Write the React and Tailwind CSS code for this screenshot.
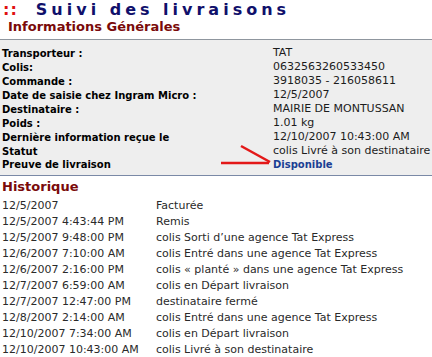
import React from 'react';

const infos = [
    ['Transporteur :', 'TAT'],
    ['Colis:', '0632563260533450'],
    ['Commande :', '3918035 - 216058611'],
    ['Date de saisie chez Ingram Micro :', '12/5/2007'],
    ['Destinataire :', 'MAIRIE DE MONTUSSAN'],
    ['Poids :', '1.01 kg'],
    ['Dernière information reçue le', '12/10/2007 10:43:00 AM'],
    ['Statut', 'colis Livré à son destinataire'],
];

const historique = [
    ['12/5/2007', 'Facturée'],
    ['12/5/2007 4:43:44 PM', 'Remis'],
    ['12/5/2007 9:48:00 PM', 'colis Sorti d\u2019une agence Tat Express'],
    ['12/6/2007 7:10:00 AM', 'colis Entré dans une agence Tat Express'],
    ['12/6/2007 2:16:00 PM', 'colis « planté » dans une agence Tat Express'],
    ['12/7/2007 6:59:00 AM', 'colis en Départ livraison'],
    ['12/7/2007 12:47:00 PM', 'destinataire fermé'],
    ['12/8/2007 2:14:00 AM', 'colis Entré dans une agence Tat Express'],
    ['12/10/2007 7:34:00 AM', 'colis en Départ livraison'],
    ['12/10/2007 10:43:00 AM', 'colis Livré à son destinataire'],
];

export default function App() {
    return (
        <div className="w-[432px] h-[357px] bg-white overflow-hidden font-['DejaVu_Sans',Verdana,sans-serif]">
            {/* Titre */}
            <div className="h-[20px] flex items-center pl-[3px] font-bold text-[16px] leading-none">
                <span className="text-[#e01010] tracking-[1px]">::</span>
                <span className="ml-[18px] text-[#10106b] tracking-[4px]">Suivi des livraisons</span>
            </div>

            <div className="h-[19px] pl-[8px] text-[13px] leading-[14px] font-bold text-[#7a0a0a]">
                Informations Générales
            </div>

            {/* Bloc infos */}
            <div className="bg-[#eeeeee] border-t border-t-[#8f969e] border-b border-b-[#7a89a6] pt-[5px] pb-[4px]">
                {infos.map(([label, value]) => (
                    <div key={label} className="grid grid-cols-[273px_1fr] h-[14px] items-center">
                        <span className="pl-[2px] text-[10px] font-bold text-black">{label}</span>
                        <span className="text-[11px] text-[#1c1c1c]">{value}</span>
                    </div>
                ))}
                <div className="grid grid-cols-[273px_1fr] h-[14px] items-center">
                    <span className="pl-[2px] text-[10px] font-bold text-black">Preuve de livraison</span>
                    <span className="relative text-[10px] font-bold text-[#1b3f94]">
                        Disponible
                        {/* fleche rouge */}
                        <svg className="absolute left-[-52px] top-[-19px]" width="52" height="30" viewBox="0 0 52 30">
                            <line x1="0" y1="25" x2="48" y2="25" stroke="#e31818" strokeWidth="2.5" />
                            <line x1="20" y1="8" x2="49" y2="24" stroke="#e31818" strokeWidth="2.5" />
                        </svg>
                    </span>
                </div>
            </div>

            <div className="h-[22px] flex items-center pl-[2px] text-[13px] font-bold text-[#7a0a0a]">
                Historique
            </div>

            {historique.map(([date, libelle]) => (
                <div key={date} className="grid grid-cols-[156px_1fr] h-[16px] items-center text-[11px] text-[#2a2a2a]">
                    <span className="pl-[2px]">{date}</span>
                    <span>{libelle}</span>
                </div>
            ))}
        </div>
    );
}
